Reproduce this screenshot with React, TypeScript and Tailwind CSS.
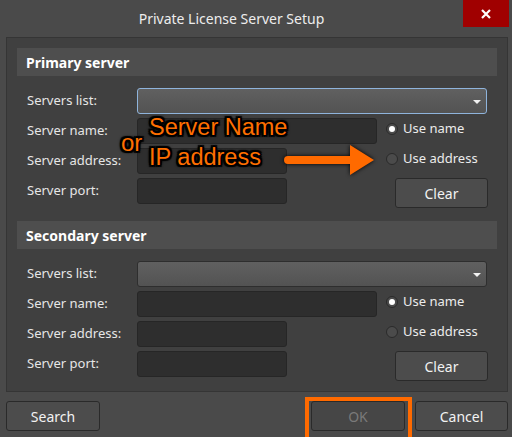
import React from 'react';

// Private License Server Setup — dark dialog with an orange annotation overlay.

const glow =
  '[text-shadow:1px_1px_0_#000,-1px_-1px_0_#000,1px_-1px_0_#000,-1px_1px_0_#000,2px_0_0_#000,-2px_0_0_#000,0_2px_0_#000,0_-2px_0_#000,2px_2px_1px_#000,-2px_-2px_1px_#000,2px_-2px_1px_#000,-2px_2px_1px_#000,0_0_4px_#000]';

function Select({ focused }: { focused?: boolean }) {
  return (
    <div
      className={`relative flex-1 h-[26px] rounded-[3px] border bg-gradient-to-b from-[#606060] to-[#535353] ${
        focused ? 'border-[#8fb4dc]' : 'border-[#2e2e2e]'
      }`}
    >
      <svg className="absolute right-[5px] top-[11px]" width="8" height="4" viewBox="0 0 8 4">
        <path d="M0 0 L8 0 L4 4 Z" fill="#f2f2f2" />
      </svg>
    </div>
  );
}

function Input({ w }: { w: string }) {
  return <div className={`${w} h-[26px] rounded-[3px] border border-[#262626] bg-[#2e2e2e]`} />;
}

function Radio({ label, checked }: { label: string; checked?: boolean }) {
  return (
    <div className="flex items-center gap-[5px] h-[18px] mt-[2px] pl-[9px] text-[13px] text-[#ececec]">
      <span className="w-[12px] h-[12px] rounded-full border border-[#2a2a2a] bg-[#4b4b4b] flex items-center justify-center">
        {checked && <span className="w-[6px] h-[6px] rounded-full bg-white" />}
      </span>
      <span>{label}</span>
    </div>
  );
}

function Button({ label, w, disabled }: { label: string; w: string; disabled?: boolean }) {
  return (
    <button
      className={`${w} h-[30px] rounded-[3px] border border-[#2a2a2a] text-[14px] ${
        disabled ? 'bg-[#464646] text-[#7a7a7a]' : 'bg-[#4c4c4c] text-[#f2f2f2]'
      }`}
    >
      {label}
    </button>
  );
}

function Label({ text }: { text: string }) {
  return <div className="w-[120px] pl-[10px] text-[13px] text-[#e6e6e6] h-[26px] flex items-center">{text}</div>;
}

function ServerSection({ title, focused, first }: { title: string; focused?: boolean; first?: boolean }) {
  return (
    <div className={first ? '' : 'mt-[13px]'}>
      <div className="h-[28px] bg-[#4e4e4e] pl-[9px] flex items-center text-[14px] font-bold text-white">
        {title}
      </div>
      <div className="flex flex-col gap-[4px] mt-[12px] pr-[10px]">
        <div className="flex">
          <Label text="Servers list:" />
          <Select focused={focused} />
        </div>
        <div className="grid grid-cols-[120px_240px_1fr] gap-y-[4px] items-start">
          <Label text="Server name:" />
          <Input w="w-[240px]" />
          <Radio label="Use name" checked />

          <Label text="Server address:" />
          <Input w="w-[150px]" />
          <Radio label="Use address" />

          <Label text="Server port:" />
          <Input w="w-[150px]" />
          <div className="pl-[18px]">
            <Button label="Clear" w="w-[93px]" />
          </div>
        </div>
      </div>
    </div>
  );
}

export default function App() {
  return (
    <div className="relative w-[512px] h-[437px] overflow-hidden bg-[#4a4a4a] font-['Noto_Sans',sans-serif]">
      {/* title bar */}
      <div className="flex h-[37px]">
        <div className="flex-1 flex items-center justify-center pb-[1px] text-[14px] text-[#ededed]">
          Private License Server Setup
        </div>
        <div className="w-[46px] h-[27px] bg-[#a00000] flex items-center justify-center mr-[3px]">
          <svg width="10" height="10" viewBox="0 0 10 10">
            <path d="M1 1 L9 9 M9 1 L1 9" stroke="#fff" strokeWidth="2.2" />
          </svg>
        </div>
      </div>

      {/* main panel */}
      <div className="ml-[6px] mr-[4px] h-[355px] border border-[#353535] bg-[#404040] px-[10px] pt-[10px]">
        <ServerSection title="Primary server" focused first />
        <ServerSection title="Secondary server" />
      </div>

      {/* footer */}
      <div className="flex items-center mt-[9px] px-[6px] pr-[4px]">
        <Button label="Search" w="w-[94px]" />
        <div className="flex-1" />
        <Button label="OK" w="w-[94px]" disabled />
        <div className="w-[10px]" />
        <Button label="Cancel" w="w-[93px]" />
      </div>

      {/* annotation overlay */}
      <div className="absolute left-[305px] top-[397px] w-[107px] h-[44px] border-[4px] border-[#ff6a00] pointer-events-none" />
      <div className={`absolute left-[149px] top-[116px] text-[23.5px] leading-none text-[#ff6f00] font-['Liberation_Sans',sans-serif] ${glow}`}>
        Server Name
      </div>
      <div className={`absolute left-[121px] top-[131px] text-[24px] leading-none text-[#ff6f00] font-['Liberation_Sans',sans-serif] ${glow}`}>
        or
      </div>
      <div className={`absolute left-[149px] top-[146px] text-[23.5px] leading-none text-[#ff6f00] font-['Liberation_Sans',sans-serif] ${glow}`}>
        IP address
      </div>
      <svg
        className="absolute left-[282px] top-[142px] drop-shadow-[0_0_2px_#000]"
        width="96"
        height="38"
        viewBox="0 0 96 38"
      >
        <path d="M6 14 L68 14 L68 3 L92 18 L68 33 L68 22 L6 22 A4 4 0 0 1 6 14 Z" fill="#ff6a00" />
      </svg>
    </div>
  );
}
